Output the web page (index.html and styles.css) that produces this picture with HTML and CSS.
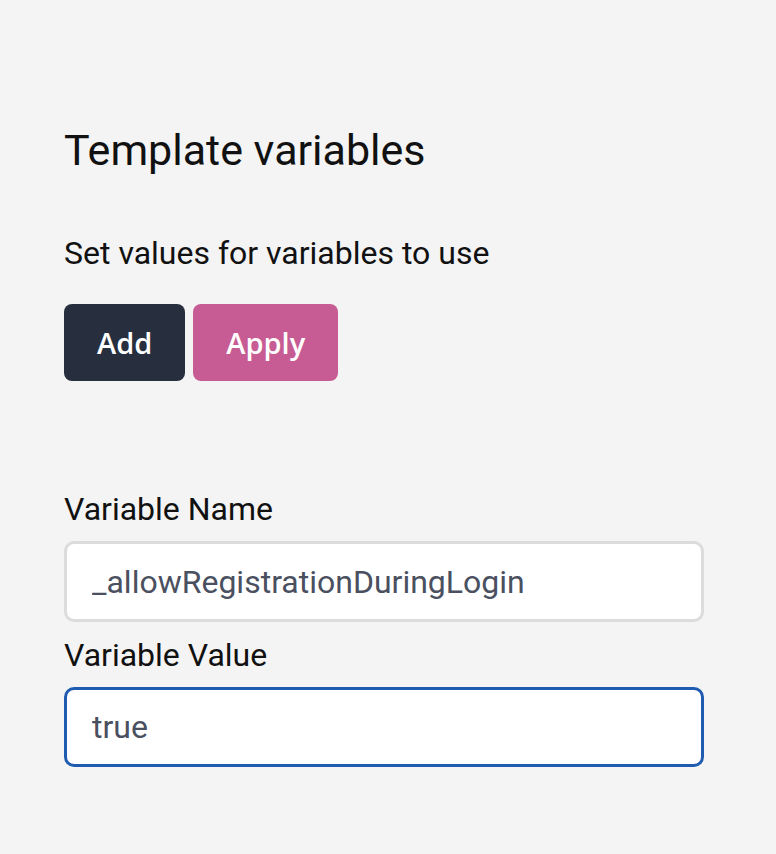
FILE: index.html
```html
<!DOCTYPE html>
<html>
<head>
    <title>Template variables</title>
    <link rel="stylesheet" href="styles.css">
</head>
<body>
    <div class="panel">
        <h1 class="title">Template variables</h1>
        <p class="subtitle">Set values for variables to use</p>

        <div class="actions">
            <button class="btn btn-dark">Add</button>
            <button class="btn btn-pink">Apply</button>
        </div>

        <div class="variable">
            <label class="field-label" for="varName">Variable Name</label>
            <input class="field" id="varName" type="text" value="_allowRegistrationDuringLogin">
            <label class="field-label" for="varValue">Variable Value</label>
            <input class="field field-focus" id="varValue" type="text" value="true">
        </div>
    </div>
</body>
</html>
```

FILE: styles.css
```css
body {
    margin: 0;
    padding: 0;
    background-color: #f4f4f4;
    font-family: Roboto, "Liberation Sans", sans-serif;
    color: #111;
}

.panel {
    padding: 120px 72px 0 64px;
}

.title {
    font-size: 43px;
    font-weight: 400;
    margin: 0;
    line-height: 60px;
}

.subtitle {
    font-size: 32px;
    margin: 53px 0 0 0;
    line-height: 40px;
}

.actions {
    display: flex;
    gap: 8px;
    margin-top: 31px;
}

.btn {
    font-family: "Open Sans", "Noto Sans", sans-serif;
    font-size: 29px;
    font-weight: 600;
    color: #fff;
    border: none;
    border-radius: 8px;
    height: 77px;
    padding: 0 33px;
    cursor: pointer;
}

.btn-dark {
    background: #272f3f;
}

.btn-pink {
    background: #c75c94;
}

.variable {
    margin-top: 108px;
}

.field-label {
    display: block;
    font-size: 32px;
    line-height: 40px;
    margin-bottom: 12px;
}

.field {
    display: block;
    width: 100%;
    box-sizing: border-box;
    height: 81px;
    border: 3px solid #dcdcdc;
    border-radius: 10px;
    background: #fff;
    padding: 0 25px;
    font-family: Roboto, "Liberation Sans", sans-serif;
    font-size: 32px;
    color: #4a5060;
    margin-bottom: 13px;
    outline: none;
}

.field-focus {
    border-color: #1f5bb0;
    height: 80px;
}
```
